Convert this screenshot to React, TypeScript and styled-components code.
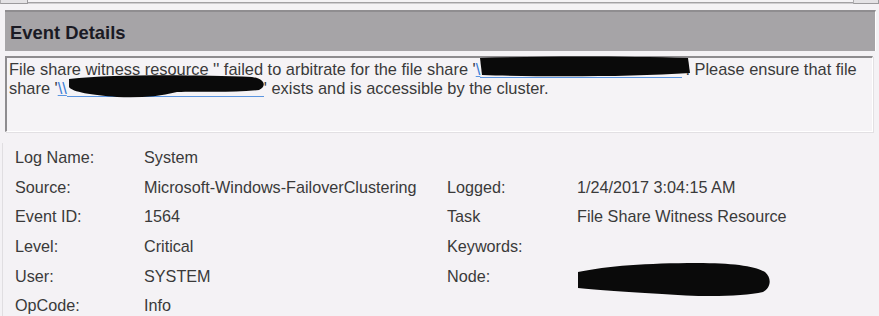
import React from "react";
import styled, { createGlobalStyle } from "styled-components";

const Global = createGlobalStyle`
  html, body { margin: 0; padding: 0; background: #f4f2f5; }
  body { width: 879px; height: 316px; overflow: hidden; font-family: "Liberation Sans", Arial, sans-serif; }
`;

const Page = styled.div`
  width: 879px;
  height: 316px;
  display: flex;
  flex-direction: column;
  background: #f4f2f5;
  overflow: hidden;
  & > * {
    flex-shrink: 0;
  }
`;

const TopStrip = styled.div`
  height: 10px;
  display: flex;
  align-items: flex-start;
  box-sizing: border-box;
`;

const TabStub = styled.div<{ $w: number }>`
  width: ${(p) => p.$w}px;
  height: 3px;
  border-left: 1px solid #b0aeb1;
  border-right: 1px solid #9c9a9d;
  border-bottom: 1px solid #9c9a9d;
  background: #e4e2e5;
`;

const TabLine = styled.div`
  flex: 1;
  height: 1px;
  margin-top: 2px;
  background: #a3a1a4;
  box-shadow: 0 1px 0 #cfcdd0;
`;

const Header = styled.div`
  margin: 0 3px 0 5px;
  height: 41px;
  background: #a6a4a7;
  border-top: 2px solid #8f8d90;
  border-right: 1px solid #ffffff;
  box-sizing: border-box;
  display: flex;
  align-items: center;
  padding-left: 5px;
  padding-top: 2px;
  font-weight: bold;
  font-size: 18.4px;
  color: #1a1a24;
`;

const MessageBox = styled.div`
  margin: 5px 6px 0 5px;
  height: 76px;
  box-sizing: border-box;
  border-top: 2px solid #8e8c8f;
  border-left: 2px solid #8e8c8f;
  border-right: 1px solid #ffffff;
  border-bottom: 1px solid #ffffff;
  box-shadow: 1px 1px 0 #e2e0e3;
  background: #f5f3f6;
  padding: 2px 0 0 2px;
  font-size: 16.4px;
  line-height: 19px;
  color: #3a3a3a;
`;

const Line = styled.div`
  white-space: nowrap;
`;

const Link = styled.span`
  color: #3a7bd5;
  text-decoration: underline;
  text-decoration-color: #5b95e0;
`;

const Redacted = styled.span<{ $w: number }>`
  position: relative;
  display: inline-block;
  width: ${(p) => p.$w}px;
  height: 1em;
  vertical-align: -3px;
  border-bottom: 1px solid #5b95e0;
  & > svg {
    position: absolute;
    left: 0;
    top: -5px;
    overflow: visible;
  }
`;

const Details = styled.div`
  margin-top: 11px;
  margin-left: 2px;
  border-left: 1px solid #e0dee1;
  padding-left: 12px;
  display: grid;
  grid-template-columns: 129px 303px 130px 1fr;
  grid-auto-rows: 29.6px;
  align-items: center;
  font-size: 16.2px;
  color: #3a3a3a;
`;

const Cell = styled.div`
  white-space: nowrap;
  position: relative;
`;

const NodeMask = styled.span`
  position: absolute;
  left: 0;
  top: -16px;
  display: block;
  & > svg {
    overflow: visible;
  }
`;

const Blob = ({ w, h, d }: { w: number; h: number; d: string }) => (
  <svg width={w} height={h} viewBox={`0 0 ${w} ${h}`}>
    <path d={d} fill="#0a0a0a" />
  </svg>
);

const rows: [string, string, string, React.ReactNode][] = [
  ["Log Name:", "System", "", ""],
  ["Source:", "Microsoft-Windows-FailoverClustering", "Logged:", "1/24/2017 3:04:15 AM"],
  ["Event ID:", "1564", "Task", "File Share Witness Resource"],
  ["Level:", "Critical", "Keywords:", ""],
  [
    "User:",
    "SYSTEM",
    "Node:",
    <NodeMask>
      <Blob
        w={194}
        h={38}
        d="M1 12 C30 6 70 3 120 3 C155 3 178 6 188 12 C195 18 194 28 186 32 C165 37 120 37 85 34 C50 32 20 30 1 28 Z"
      />
    </NodeMask>,
  ],
  ["OpCode:", "Info", "", ""],
];

export default function App() {
  return (
    <Page>
      <Global />
      <TopStrip>
        <TabStub $w={26} />
        <TabLine />
        <TabStub $w={24} />
      </TopStrip>
      <Header>Event Details</Header>
      <MessageBox>
        <Line>
          File share witness resource '' failed to arbitrate for the file share '
          <Link>\</Link>
          <Redacted $w={202}>
            <Blob
              w={210}
              h={22}
              d="M0 2 C60 0 140 0 208 2 L210 17 C150 21 60 21 2 19 Z"
            />
          </Redacted>
          '. Please ensure that file
        </Line>
        <Line>
          share '<Link>\\</Link>
          <Redacted $w={197}>
            <Blob
              w={200}
              h={24}
              d="M2 4 C50 -1 130 0 185 2 C198 4 200 11 192 15 C165 18 130 16 110 17 C90 22 70 23 50 22 C25 20 5 17 2 12 Z"
            />
          </Redacted>
          ' exists and is accessible by the cluster.
        </Line>
      </MessageBox>
      <Details>
        {rows.map(([a, b, c, d], i) => (
          <React.Fragment key={i}>
            <Cell>{a}</Cell>
            <Cell>{b}</Cell>
            <Cell>{c}</Cell>
            <Cell>{d}</Cell>
          </React.Fragment>
        ))}
      </Details>
    </Page>
  );
}
